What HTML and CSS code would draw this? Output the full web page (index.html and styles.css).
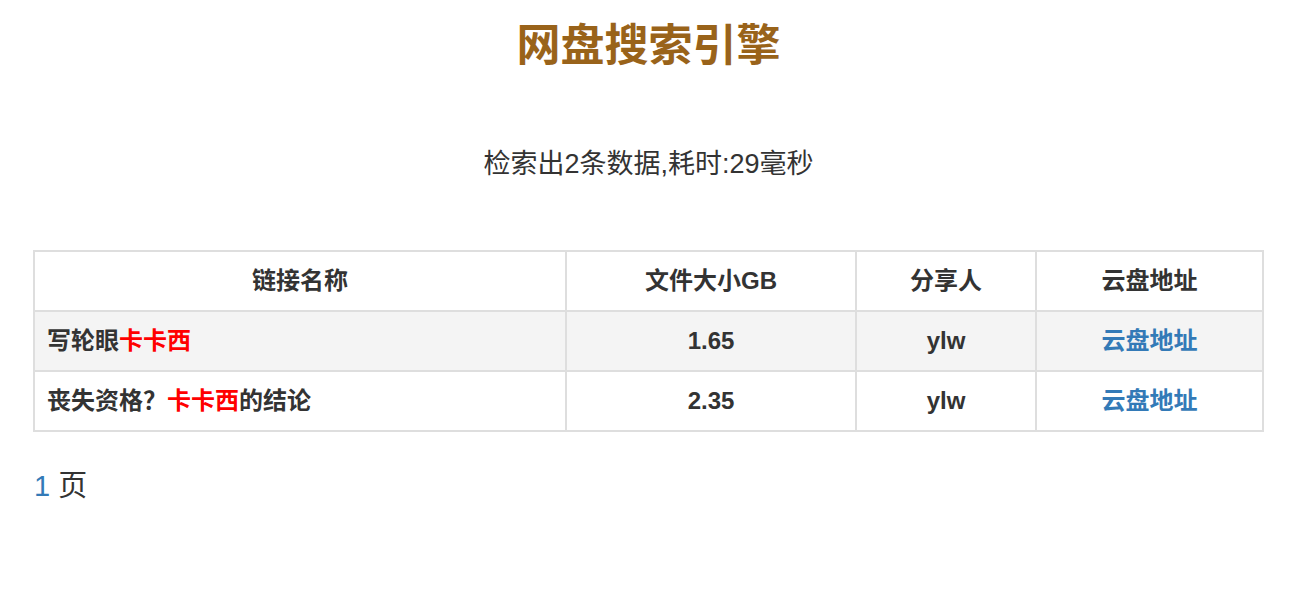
FILE: index.html
```html
<!DOCTYPE html>
<html lang="zh-CN">
<head>
<meta charset="utf-8">
<title>网盘搜索引擎</title>
<link rel="stylesheet" href="styles.css">
</head>
<body>
<div class="page">
<h1 class="title">网盘搜索引擎</h1>
<p class="summary">检索出2条数据,耗时:29毫秒</p>
<table class="results">
  <colgroup>
    <col class="c-name">
    <col class="c-size">
    <col class="c-user">
    <col class="c-link">
  </colgroup>
  <thead>
    <tr>
      <th>链接名称</th>
      <th>文件大小GB</th>
      <th>分享人</th>
      <th>云盘地址</th>
    </tr>
  </thead>
  <tbody>
    <tr class="striped">
      <td class="name">写轮眼<span class="hl">卡卡西</span></td>
      <td>1.65</td>
      <td>ylw</td>
      <td><a href="#">云盘地址</a></td>
    </tr>
    <tr>
      <td class="name">丧失资格？<span class="hl">卡卡西</span>的结论</td>
      <td>2.35</td>
      <td>ylw</td>
      <td><a href="#">云盘地址</a></td>
    </tr>
  </tbody>
</table>
<div class="pager"><a href="#">1</a> 页</div>
</div>
</body>
</html>
```
FILE: styles.css
```css
html, body {
  margin: 0;
  padding: 0;
  background: #fff;
}
body {
  font-family: "Liberation Sans", "Noto Sans CJK SC", sans-serif;
  color: #333;
}
.page {
  width: 1297px;
  padding-top: 19px;
}
.title {
  margin: 0;
  text-align: center;
  font-size: 44px;
  line-height: 53px;
  font-weight: bold;
  color: #99631a;
}
.summary {
  margin: 72px 0 0;
  text-align: center;
  font-size: 27px;
  line-height: 40px;
  color: #333;
}
.results {
  margin: 66px 0 0 33px;
  width: 1229px;
  border-collapse: collapse;
  table-layout: fixed;
  font-size: 24px;
  font-weight: bold;
  color: #333;
}
.c-name { width: 532px; }
.c-size { width: 290px; }
.c-user { width: 180px; }
.c-link { width: 227px; }
.results th,
.results td {
  border: 2px solid #dedede;
  padding: 14px 12px;
  line-height: 30px;
  text-align: center;
}
.results th {
  font-weight: bold;
}
.results td.name {
  text-align: left;
}
.results tr.striped td {
  background: #f4f4f4;
}
.hl {
  color: #ff0000;
}
.results a {
  color: #337ab7;
  text-decoration: none;
  font-weight: bold;
}
.pager {
  margin: 34px 0 0 34px;
  font-size: 29px;
  line-height: 40px;
  color: #333;
}
.pager a {
  color: #337ab7;
  text-decoration: none;
}
```
